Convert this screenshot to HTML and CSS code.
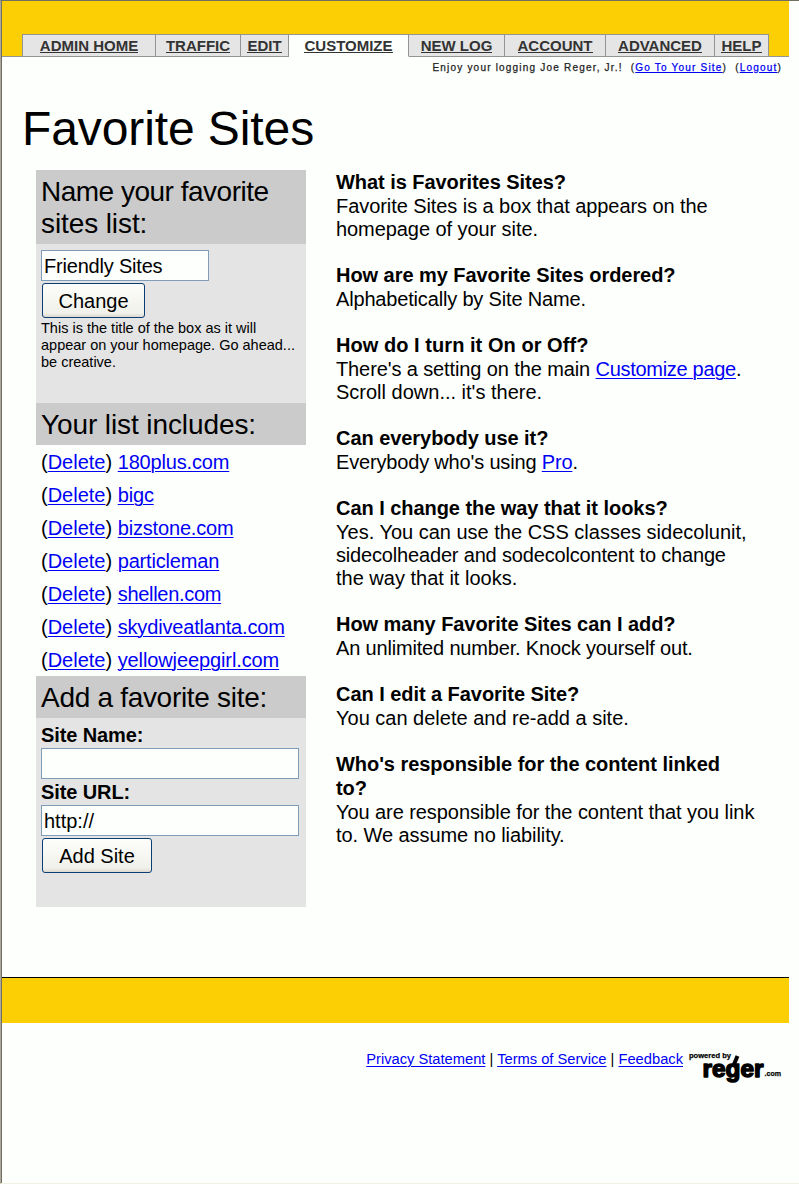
FILE: index.html
```html
<!DOCTYPE html>
<html lang="en">
<head>
<meta charset="utf-8">
<title>Favorite Sites</title>
<link rel="stylesheet" href="styles.css">
</head>
<body>
<div class="window">
  <header class="masthead">
    <nav class="tabs">
      <a class="tab w-admin" href="#"><span>ADMIN HOME</span></a>
      <a class="tab w-traffic" href="#"><span>TRAFFIC</span></a>
      <a class="tab w-edit" href="#"><span>EDIT</span></a>
      <a class="tab w-customize active" href="#"><span>CUSTOMIZE</span></a>
      <a class="tab w-newlog" href="#"><span>NEW LOG</span></a>
      <a class="tab w-account" href="#"><span>ACCOUNT</span></a>
      <a class="tab w-advanced" href="#"><span>ADVANCED</span></a>
      <a class="tab w-help" href="#"><span>HELP</span></a>
    </nav>
  </header>
  <div class="greeting"><span>Enjoy your logging Joe Reger, Jr.!</span><span>(<a href="#">Go To Your Site</a>)</span><span>(<a href="#">Logout</a>)</span></div>
  <h1 class="title">Favorite Sites</h1>
  <div class="columns">
    <aside class="side">
      <h2 class="box-head"><span class="snug">Name your favorite</span><br>sites list:</h2>
      <form class="box name-box">
        <input class="field short" type="text" value="Friendly Sites">
        <button class="btn change" type="button">Change</button>
        <p class="note">This is the title of the box as it will<br>appear on your homepage. Go ahead...<br>be creative.</p>
      </form>
      <h2 class="box-head">Your list includes:</h2>
      <ul class="sites">
        <li>(<a href="#">Delete</a>) <a class="tight" href="#">180plus.com</a></li>
        <li>(<a href="#">Delete</a>) <a class="tight" href="#">bigc</a></li>
        <li>(<a href="#">Delete</a>) <a class="tight" href="#">bizstone.com</a></li>
        <li>(<a href="#">Delete</a>) <a class="tight" href="#">particleman</a></li>
        <li>(<a href="#">Delete</a>) <a class="close" href="#">shellen.com</a></li>
        <li>(<a href="#">Delete</a>) <a class="tight" href="#">skydiveatlanta.com</a></li>
        <li>(<a href="#">Delete</a>) <a class="mid" href="#">yellowjeepgirl.com</a></li>
      </ul>
      <h2 class="box-head"><span class="close">Add a favorite site:</span></h2>
      <form class="box add-box">
        <label class="label" for="site-name">Site Name:</label>
        <input class="field" id="site-name" type="text">
        <label class="label" for="site-url">Site URL:</label>
        <input class="field url" id="site-url" type="text" value="http://">
        <button class="btn add" type="button">Add Site</button>
      </form>
    </aside>
    <main class="faq">
      <section><h3>What is Favorites Sites?</h3><p>Favorite Sites is a box that appears on the<br>homepage of your site.</p></section>
      <section><h3>How are my Favorite Sites ordered?</h3><p class="tight">Alphabetically by Site Name.</p></section>
      <section><h3 class="loose">How do I turn it On or Off?</h3><p><span class="mid">There's a setting on the main </span><a class="close" href="#">Customize page</a>.<br><span class="even">Scroll down... it's there.</span></p></section>
      <section><h3>Can everybody use it?</h3><p class="tight">Everybody who's using <a href="#">Pro</a>.</p></section>
      <section><h3>Can I change the way that it looks?</h3><p><span class="even">Yes. You can use the CSS classes sidecolunit,</span><br><span class="tight">sidecolheader and sodecolcontent to change</span><br><span class="even">the way that it looks.</span></p></section>
      <section><h3>How many Favorite Sites can I add?</h3><p class="tight">An unlimited number. Knock yourself out.</p></section>
      <section><h3>Can I edit a Favorite Site?</h3><p class="even">You can delete and re-add a site.</p></section>
      <section><h3>Who's responsible for the content linked<br>to?</h3><p>You are responsible for the content that you link<br>to. We assume no liability.</p></section>
    </main>
  </div>
  <div class="footer-bar"></div>
  <footer class="footer">
    <div class="legal"><a href="#">Privacy Statement</a> | <a href="#">Terms of Service</a> | <a href="#">Feedback</a></div>
    <svg class="logo" width="94" height="38" viewBox="0 0 94 38" role="img" aria-label="powered by reger.com">
      <text class="logo-small" x="1" y="7" textLength="42" lengthAdjust="spacingAndGlyphs">powered by</text>
      <text class="logo-big" x="14.5" y="26" textLength="61" lengthAdjust="spacingAndGlyphs">reger</text>
      <path class="logo-ear" d="M45.500 14.500L49.500 5"/>
      <text class="logo-small" x="76.500" y="25" textLength="16.500" lengthAdjust="spacingAndGlyphs">.com</text>
    </svg>
  </footer>
</div>
</body>
</html>
```
FILE: styles.css
```css
* { box-sizing: border-box; }
body {
  margin: 0;
  background: #fdfffc;
  color: #000;
  font: 20px/23px "Liberation Sans", Arial, sans-serif;
}
h1, h2, h3, p, ul { margin: 0; padding: 0; font-weight: normal; }
a { color: #0000f4; text-decoration-thickness: 1px; text-underline-offset: 2px; }
.window {
  height: 1184px;
  padding-right: 10px;
  border-top: 1px solid #716f64;
  border-left: 1px solid #aca899;
  border-bottom: 1px solid #f1efe2;
  box-shadow: inset 1px 0 #716f64;
  padding-left: 1px;
  overflow: hidden;
}
.masthead {
  height: 56px;
  padding: 33px 0 0 20px;
  background: #fccf05;
  border-bottom: 1px solid #949494;
}
.tabs { display: flex; height: 23px; }
.tab {
  display: flex;
  justify-content: center;
  height: 23px;
  padding-top: 3px;
  background: #e5e5e5;
  border: 1px solid #949494;
  border-left-width: 0;
  color: #333;
  font-size: 15px;
  font-weight: bold;
  line-height: 14px;
  text-decoration: none;
}
.tab span { height: 15px; border-bottom: 1px solid #333; white-space: nowrap; line-height: 15px; }
.active { background: #fdfffc; border-bottom-color: #fdfffc; }
.w-admin { width: 134px; border-left-width: 1px; }
.w-traffic { width: 85px; }
.w-edit { width: 48px; }
.w-customize { width: 120px; }
.w-newlog { width: 96px; }
.w-account { width: 101px; }
.w-advanced { width: 109px; }
.w-help { width: 54px; }
.greeting {
  display: flex;
  justify-content: flex-end;
  gap: 8px;
  height: 43px;
  padding: 5px 7px 0 0;
  font-size: 10px;
  line-height: 12px;
  letter-spacing: 1.2px;
  color: #222;
  -webkit-text-stroke: .25px currentColor;
}
.greeting a { text-underline-offset: 1px; }
.title { height: 69px; padding: 1px 0 0 20px; font-size: 48px; line-height: 56px; letter-spacing: -.1px; }
.columns { display: flex; gap: 30px; height: 808px; padding-left: 34px; }
.side { width: 270px; padding-top: 1px; }
.box-head { padding: 6px 5px 4px; background: #cbcbcb; font-size: 28px; line-height: 32px; letter-spacing: -.1px; white-space: nowrap; }
.box { display: flex; flex-direction: column; align-items: flex-start; background: #e4e4e4; }
.name-box { height: 159px; padding: 6px 5px 0; }
.field {
  width: 258px;
  height: 31px;
  padding: 1px 2px 0;
  border: 1px solid #7f9db9;
  border-radius: 0;
  background: #fdfffc;
  color: #000;
  font: 20px "Liberation Sans", Arial, sans-serif;
  letter-spacing: -.2px;
}
.short { width: 168px; }
.url { letter-spacing: 0; }
.btn {
  height: 35px;
  margin: 2px 0 0 1px;
  padding: 1px 0 0;
  border: 1px solid #0b3f73;
  border-radius: 3px;
  background: linear-gradient(#fdfdfb, #f1f1eb 88%, #dcd8cf);
  color: #000;
  font: 20px "Liberation Sans", Arial, sans-serif;
}
.change { width: 103px; }
.add { width: 110px; }
.note { margin-top: 2px; font-size: 14.5px; line-height: 17px; white-space: nowrap; }
.sites { height: 231px; list-style: none; }
.sites li { height: 33px; padding: 6px 0 0 5px; white-space: nowrap; }
.add-box { height: 189px; padding: 5px 5px 0; }
.label { height: 25px; font-weight: bold; line-height: 24px; letter-spacing: -.1px; }
.label:nth-of-type(2) { height: 26px; line-height: 27px; }
.faq { padding-top: 1px; white-space: nowrap; letter-spacing: -.07px; }
.faq section { padding-bottom: 22px; }
.faq h3 { font-size: 20px; font-weight: bold; line-height: 24px; letter-spacing: -.05px; }
.faq p { padding-top: 1px; }
.even { letter-spacing: 0; }
.faq .loose { letter-spacing: .05px; }
.mid { letter-spacing: -.11px; }
.tight { letter-spacing: -.17px; }
.close { letter-spacing: -.3px; }
.snug { letter-spacing: -.5px; }
.footer-bar { height: 46px; background: #fccf05; border-top: 1px solid #000; }
.footer { display: flex; justify-content: flex-end; gap: 5px; padding: 28px 7px 0 0; }
.legal { font-size: 14.7px; line-height: 17px; white-space: nowrap; }
.logo-small { font: bold 8px "Liberation Sans", Arial, sans-serif; stroke: #000; stroke-width: .25px; }
.logo-big { font: bold 24px "Liberation Sans", Arial, sans-serif; stroke: #000; stroke-width: 1.5px; stroke-linejoin: round; }
.logo-ear { fill: none; stroke: #000; stroke-width: 4px; }
```
